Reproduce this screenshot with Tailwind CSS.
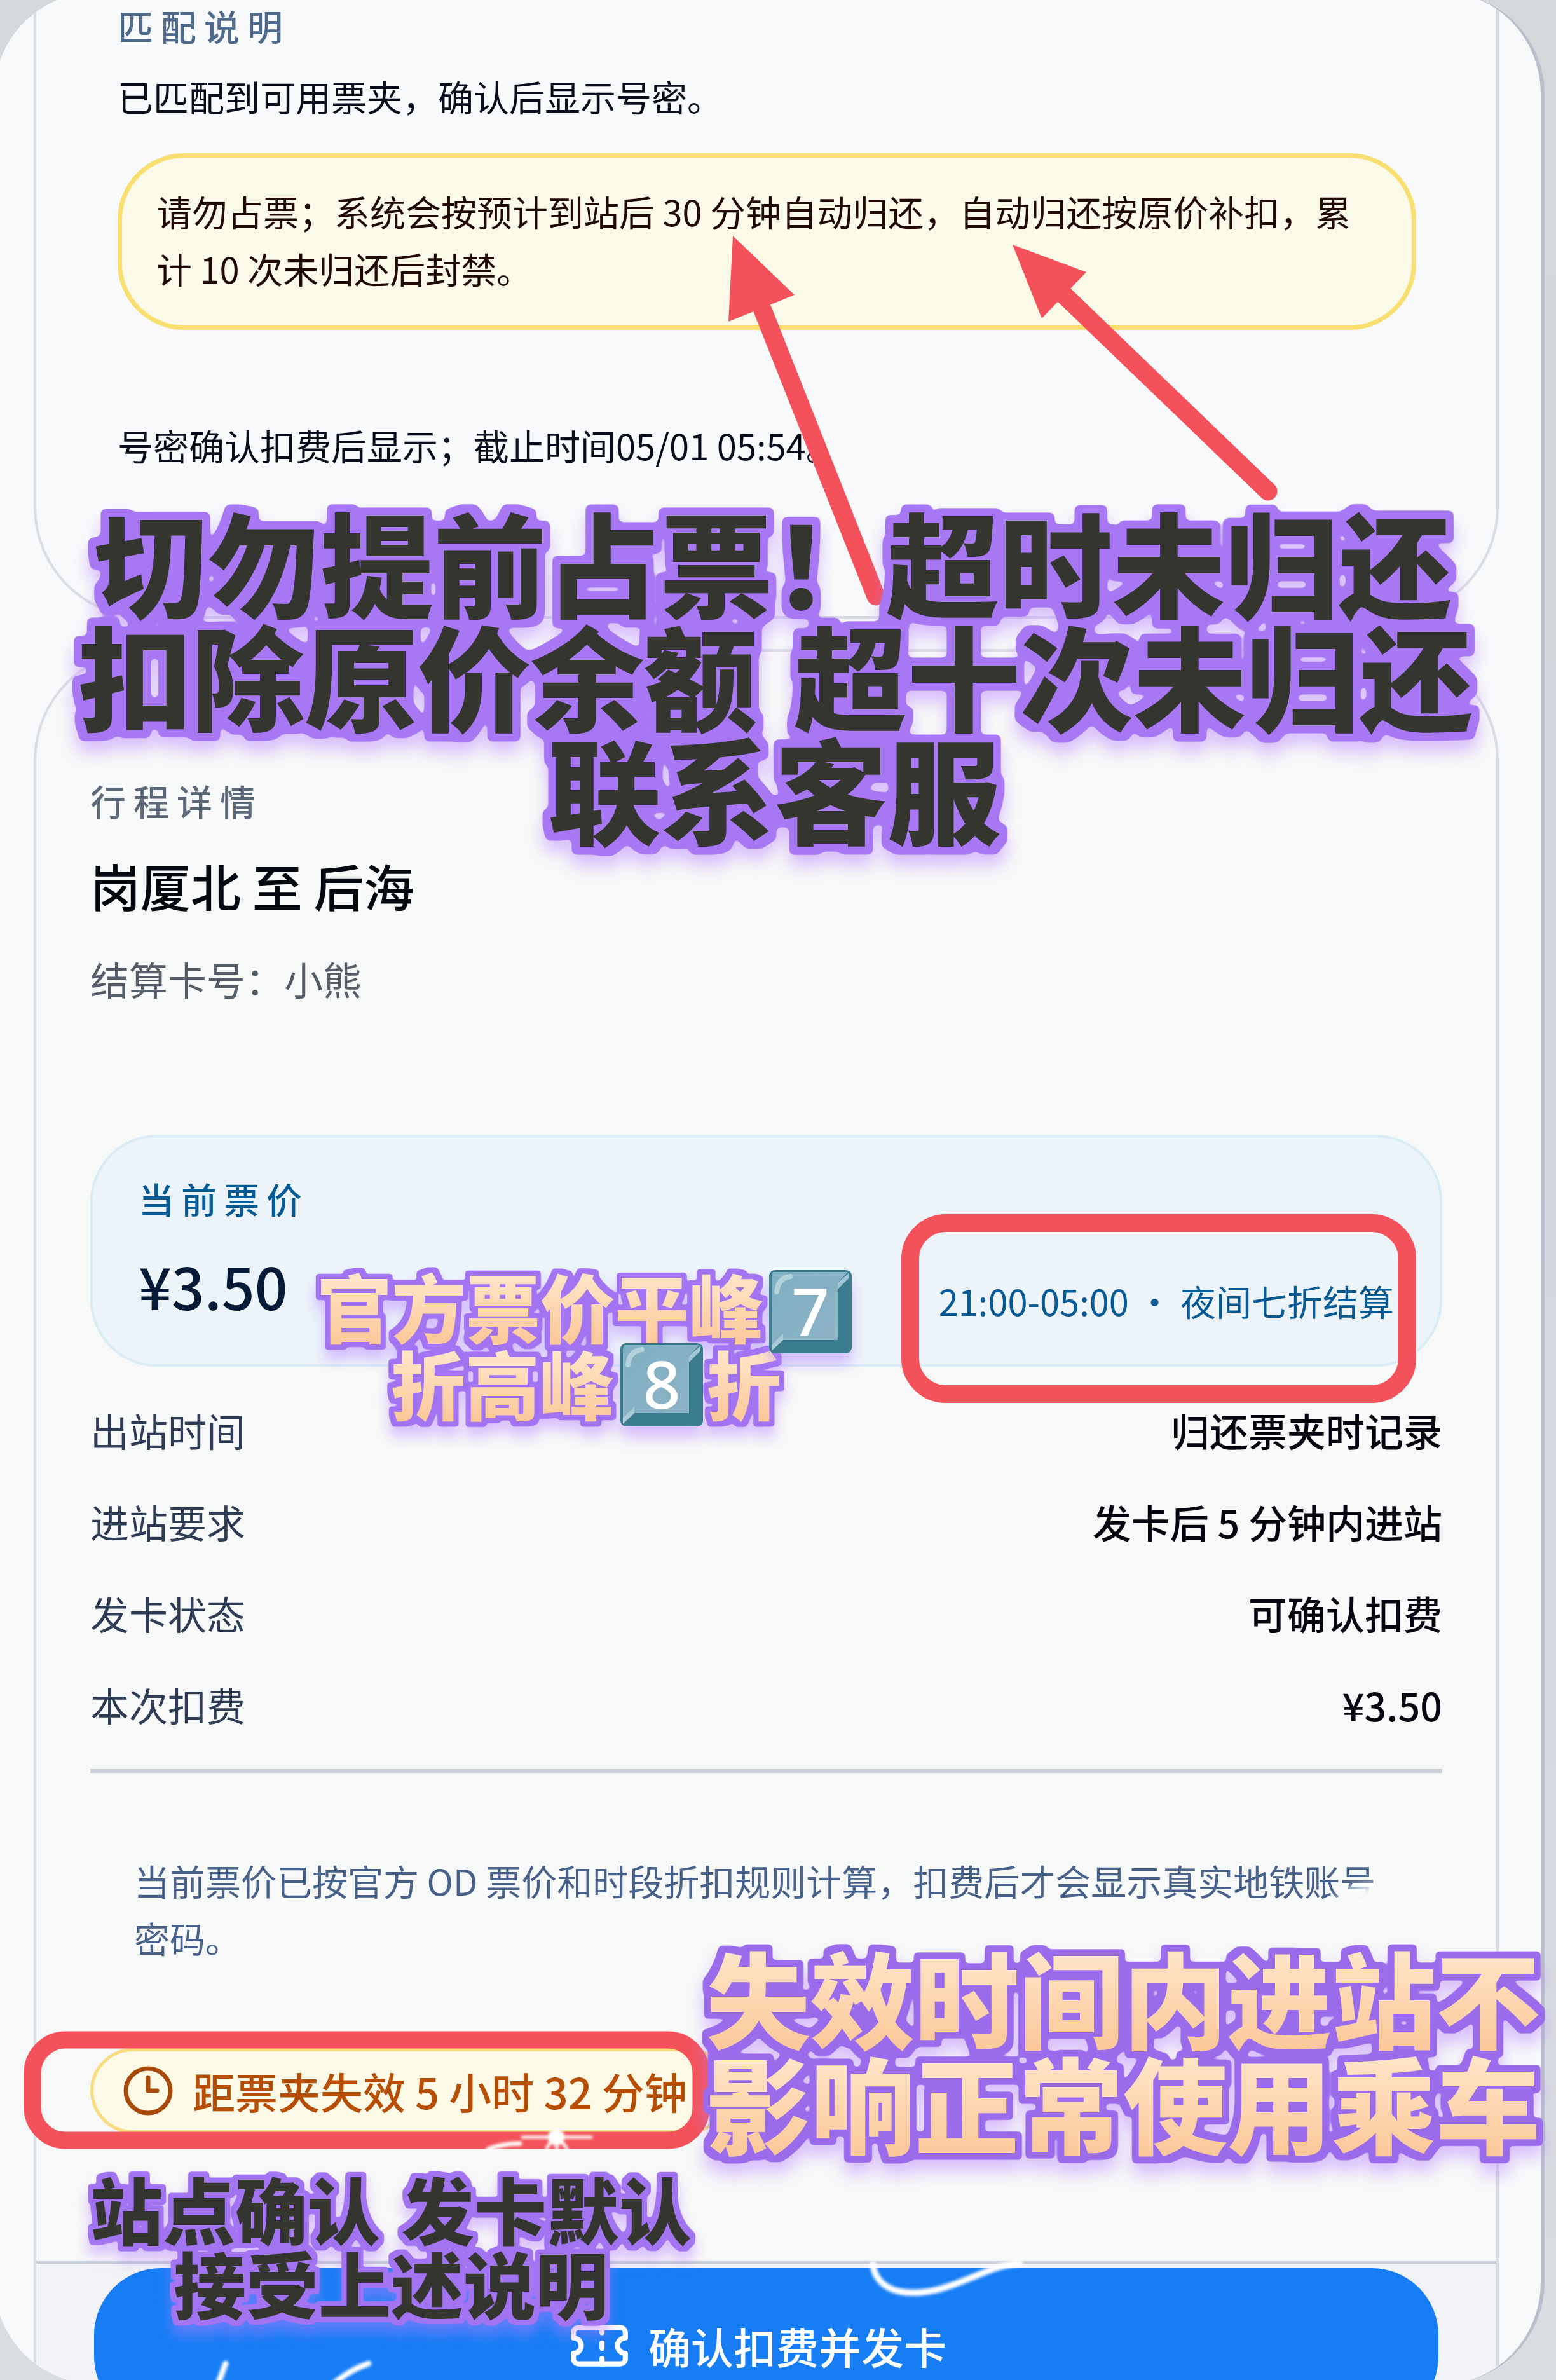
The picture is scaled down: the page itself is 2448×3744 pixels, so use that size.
<!DOCTYPE html>
<html lang="zh-CN">
<head>
    <meta charset="UTF-8">
    <meta name="viewport" content="width=device-width, initial-scale=1.0">
    <title>行程详情</title>
    <script src="https://cdn.jsdelivr.net/npm/@tailwindcss/browser@4"></script>
</head>
<body class="h-screen overflow-hidden bg-[#d5d8dd] font-['Noto_Sans_CJK_SC',sans-serif]">
<div class="relative h-screen overflow-hidden bg-linear-to-b from-[#d3d8db] via-[#d3d6de] to-[#d9dce1]">

<main class="-mt-3 -ml-[9px] mr-[18px] h-[calc(100vh+18px)] overflow-hidden rounded-[160px] border-r-[6px] border-[#b9becb] bg-[#f7f9fa] pl-[62px] pr-[66px]">

    <!-- match notice -->
    <section class="rounded-b-[175px] border-4 border-t-0 border-[#dadde6] bg-[#f7f9fa] pt-[10px] pb-[224px] pl-[128px] pr-[126px] text-[56px] leading-[90px] text-[#0a0d1c]">
        <h2 class="font-medium leading-[84px] tracking-[12px] text-[#506a8c]">匹配说明</h2>
        <p class="mt-6">已匹配到可用票夹，确认后显示号密。</p>
        <p class="mt-[45px] rounded-[105px] border-[7px] border-[#f8df70] bg-[#fbf9e8] px-[54px] pt-[39px] pb-[45px] text-[#210a04]">请勿占票；系统会按预计到站后 30 分钟自动归还，自动归还按原价补扣，累计 10 次未归还后封禁。</p>
        <p class="mt-[136px]">号密确认扣费后显示；截止时间05/01 05:54。</p>
    </section>

    <!-- trip details -->
    <section class="mt-12 rounded-t-[175px] border-4 border-b-0 border-[#dadde6] bg-[#f7f8f8] pt-[192px]">
        <div class="px-[85px]">
            <h2 class="text-[56px] font-medium leading-[84px] tracking-[12px] text-[#5c6777]">行程详情</h2>
            <h1 class="mt-[42px] text-[79px] font-medium leading-[100px] text-[#05080f]">岗厦北 至 后海</h1>
            <p class="mt-[52px] text-[61px] leading-[90px] text-[#555d69]">结算卡号：小熊</p>

            <div class="mt-[200px] rounded-[105px] border-4 border-[#d9ebf5] bg-[#ecf4fa] px-[72px] pt-[54px] pb-[70px]">
                <h3 class="text-[56px] font-medium leading-[84px] tracking-[11px] text-[#065b94]">当前票价</h3>
                <div class="mt-[39px] flex items-end justify-between">
                    <strong class="text-[91px] font-medium leading-[110px] text-[#041a36]">¥3.50</strong>
                    <span class="text-[56px] leading-[60px] text-[#075a94]">21:00-05:00 • 夜间七折结算</span>
                </div>
            </div>

            <dl class="mt-[54px] flex flex-col gap-[52px] text-[61px] leading-[92px]">
                <div class="flex justify-between"><dt class="text-[#2f3c55]">出站时间</dt><dd class="font-medium text-[#05060f]">归还票夹时记录</dd></div>
                <div class="flex justify-between"><dt class="text-[#2f3c55]">进站要求</dt><dd class="font-medium text-[#05060f]">发卡后 5 分钟内进站</dd></div>
                <div class="flex justify-between"><dt class="text-[#2f3c55]">发卡状态</dt><dd class="font-medium text-[#05060f]">可确认扣费</dd></div>
                <div class="flex justify-between"><dt class="text-[#2f3c55]">本次扣费</dt><dd class="font-medium text-[#05060f]">¥3.50</dd></div>
            </dl>
            <hr class="mt-[55px] border-t-[6px] border-[#c8cdd8]">

            <p class="mt-[124px] px-[69px] text-[56px] leading-[90px] text-[#48618a]">当前票价已按官方 OD 票价和时段折扣规则计算，扣费后才会显示真实地铁账号密码。</p>

            <div class="mt-[129px] flex w-fit items-center gap-7 rounded-full border-[5px] border-[#f9dc80] bg-[#fdf9e7] pl-11 pr-16 text-[67px] font-medium leading-[124px] text-[#b64e06]">
                <svg class="size-[84px]" viewBox="0 0 24 24" fill="none" stroke="#a84a0a" stroke-width="2" stroke-linecap="round" stroke-linejoin="round"><circle cx="12" cy="12" r="10"/><path d="M12 6v6h4"/></svg>
                距票夹失效 5 小时 32 分钟
            </div>
        </div>

        <footer class="mt-[201px] border-t-4 border-[#c5ccd6] bg-[#f2f3f6] px-[91px] pt-[7px] pb-10">
            <button type="button" class="flex h-[244px] w-full items-center justify-center gap-7 rounded-[105px] bg-[#167df5] pr-7 text-[67px] font-medium text-white">
                <svg class="size-[98px]" viewBox="0 0 24 24" fill="none" stroke="currentColor" stroke-width="2" stroke-linecap="round" stroke-linejoin="round"><path d="M2 9a3 3 0 0 1 0 6v2a2 2 0 0 0 2 2h16a2 2 0 0 0 2-2v-2a3 3 0 0 1 0-6V7a2 2 0 0 0-2-2H4a2 2 0 0 0-2 2Z"/><path d="M13 5v2M13 11v2M13 17v2"/></svg>
                确认扣费并发卡
            </button>
        </footer>
    </section>
</main>

<!-- hand-drawn notes on top of the page -->
<svg class="pointer-events-none absolute top-0 left-0 w-full" viewBox="0 0 2448 3744">
    <defs>
        <linearGradient id="peach" x1="0" y1="0" x2="0" y2="1">
            <stop offset="0.2" stop-color="#fee6c8"/>
            <stop offset="0.85" stop-color="#fbc89a"/>
        </linearGradient>
        <linearGradient id="key" x1="0" y1="0" x2="1" y2="1">
            <stop offset="0" stop-color="#7fb0c2"/>
            <stop offset="1" stop-color="#8fb2c6"/>
        </linearGradient>
        <filter id="glow" x="-20%" y="-20%" width="140%" height="150%">
            <feDropShadow dx="0" dy="18" stdDeviation="10" flood-color="#b57cff" flood-opacity="0.45"/>
        </filter>
        <!-- violet outline with rounded corners, plus a shadow below -->
        <filter id="outline-lg" x="-5%" y="-15%" width="110%" height="130%" color-interpolation-filters="sRGB">
            <feMorphology in="SourceAlpha" operator="dilate" radius="12"/>
            <feGaussianBlur stdDeviation="4"/>
            <feComponentTransfer result="grow"><feFuncA type="linear" slope="8" intercept="-3"/></feComponentTransfer>
            <feFlood flood-color="#a877f3"/>
            <feComposite in2="grow" operator="in" result="edge"/>
            <feDropShadow in="edge" dx="0" dy="18" stdDeviation="12" flood-color="#b57cff" flood-opacity="0.45" result="shade"/>
            <feMerge><feMergeNode in="shade"/><feMergeNode in="SourceGraphic"/></feMerge>
        </filter>
        <filter id="outline-md" x="-5%" y="-15%" width="110%" height="130%" color-interpolation-filters="sRGB">
            <feMorphology in="SourceAlpha" operator="dilate" radius="10"/>
            <feGaussianBlur stdDeviation="3"/>
            <feComponentTransfer result="grow"><feFuncA type="linear" slope="6" intercept="-2"/></feComponentTransfer>
            <feFlood flood-color="#9a6cec"/>
            <feComposite in2="grow" operator="in" result="edge"/>
            <feDropShadow in="edge" dx="0" dy="18" stdDeviation="12" flood-color="#b57cff" flood-opacity="0.45" result="shade"/>
            <feMerge><feMergeNode in="shade"/><feMergeNode in="SourceGraphic"/></feMerge>
        </filter>
        <filter id="outline-sm" x="-5%" y="-15%" width="110%" height="135%" color-interpolation-filters="sRGB">
            <feMorphology in="SourceAlpha" operator="dilate" radius="7"/>
            <feGaussianBlur stdDeviation="2"/>
            <feComponentTransfer result="grow"><feFuncA type="linear" slope="5" intercept="-1"/></feComponentTransfer>
            <feFlood flood-color="#a274f2"/>
            <feComposite in2="grow" operator="in" result="edge"/>
            <feDropShadow in="edge" dx="0" dy="16" stdDeviation="10" flood-color="#b57cff" flood-opacity="0.45" result="shade"/>
            <feMerge><feMergeNode in="shade"/><feMergeNode in="SourceGraphic"/></feMerge>
        </filter>
        <filter id="soft"><feGaussianBlur stdDeviation="2"/></filter>
        <filter id="haze" x="-50%" y="-50%" width="200%" height="200%"><feGaussianBlur stdDeviation="8"/></filter>
        <g id="keycap">
            <rect width="130" height="131" rx="9" fill="#3b7b8e"/>
            <path d="M6 3H124L108 20V110H22L4 126V9Z" fill="url(#key)"/>
            <path d="M4 127L22 110V100L4 118Z" fill="#a9cbd6"/>
            <path d="M108 20L126 4V12L108 30Z" fill="#a2c6d3"/>
            <path d="M12 34Q14 12 34 10" fill="none" stroke="#b4d2dc" stroke-width="8" stroke-linecap="round"/>
        </g>
    </defs>

    <!-- arrows -->
    <g fill="#f4515b" stroke="#f4515b">
        <path d="M1200 488L1378 938" stroke-width="29" stroke-linecap="round"/>
        <path d="M1153 371L1250 464L1146 506Z" stroke="none"/>
        <path d="M1676 466L1995 773" stroke-width="29" stroke-linecap="round"/>
        <path d="M1593 385L1709 428L1639 501Z" stroke="none"/>
    </g>

    <!-- red frames -->
    <g fill="none" stroke="#f4525a">
        <rect x="1432" y="1924" width="782" height="269" rx="56" stroke-width="28"/>
        <rect x="51" y="3209" width="1052" height="158" rx="52" stroke-width="27"/>
    </g>

    <!-- sparkles -->
    <g stroke="#fff" fill="none" stroke-linecap="round" filter="url(#soft)">
        <path d="M1373 3562C1380 3612 1440 3616 1500 3594S1560 3566 1604 3560" stroke-width="10"/>
        <path d="M355 3718L343 3750M580 3718Q550 3728 525 3750" stroke-width="9"/>
        <path d="M818 3372Q790 3372 768 3381" stroke-width="7"/>
        <path d="M822 3362H930M860 3380L874 3356L892 3380M876 3360V3380" stroke-width="5"/>
        <circle cx="875" cy="3362" r="13" fill="#fff" stroke="none"/>
    </g>
    <ellipse cx="2144" cy="2984" rx="44" ry="18" fill="#f8f9fa" filter="url(#haze)" transform="rotate(-14 2144 2984)"/>

    <g font-weight="900">
        <g font-size="178" fill="#34352f" filter="url(#outline-lg)">
            <text x="148" y="959">切勿提前占票！超时未归还</text>
            <text x="123" y="1137">扣除原价余额</text>
            <text x="1249" y="1137">超十次未归还</text>
            <text x="862" y="1315">联系客服</text>
        </g>
        <g font-size="114" fill="#34352f" filter="url(#outline-sm)">
            <text x="142" y="3522">站点确认</text>
            <text x="632" y="3522">发卡默认</text>
            <text x="273" y="3639">接受上述说明</text>
        </g>
        <g font-size="117" fill="url(#peach)" filter="url(#outline-sm)">
            <text x="499" y="2104">官方票价平峰</text>
            <text x="615" y="2225">折高峰</text>
            <text x="1112" y="2225">折</text>
        </g>
        <g font-size="164" fill="url(#peach)" filter="url(#outline-md)">
            <text x="1111" y="3210">失效时间内进站不</text>
            <text x="1111" y="3376">影响正常使用乘车</text>
        </g>
    </g>

    <!-- keycaps -->
    <g filter="url(#glow)">
        <use href="#keycap" x="1210" y="1998"/>
        <use href="#keycap" x="976" y="2113"/>
    </g>
    <g class="font-['Noto_Sans',sans-serif]" font-size="104" font-weight="500" fill="#fff" text-anchor="middle">
        <text x="1275" y="2101">7</text>
        <text x="1041" y="2216">8</text>
    </g>
</svg>
</div>
</body>
</html>
